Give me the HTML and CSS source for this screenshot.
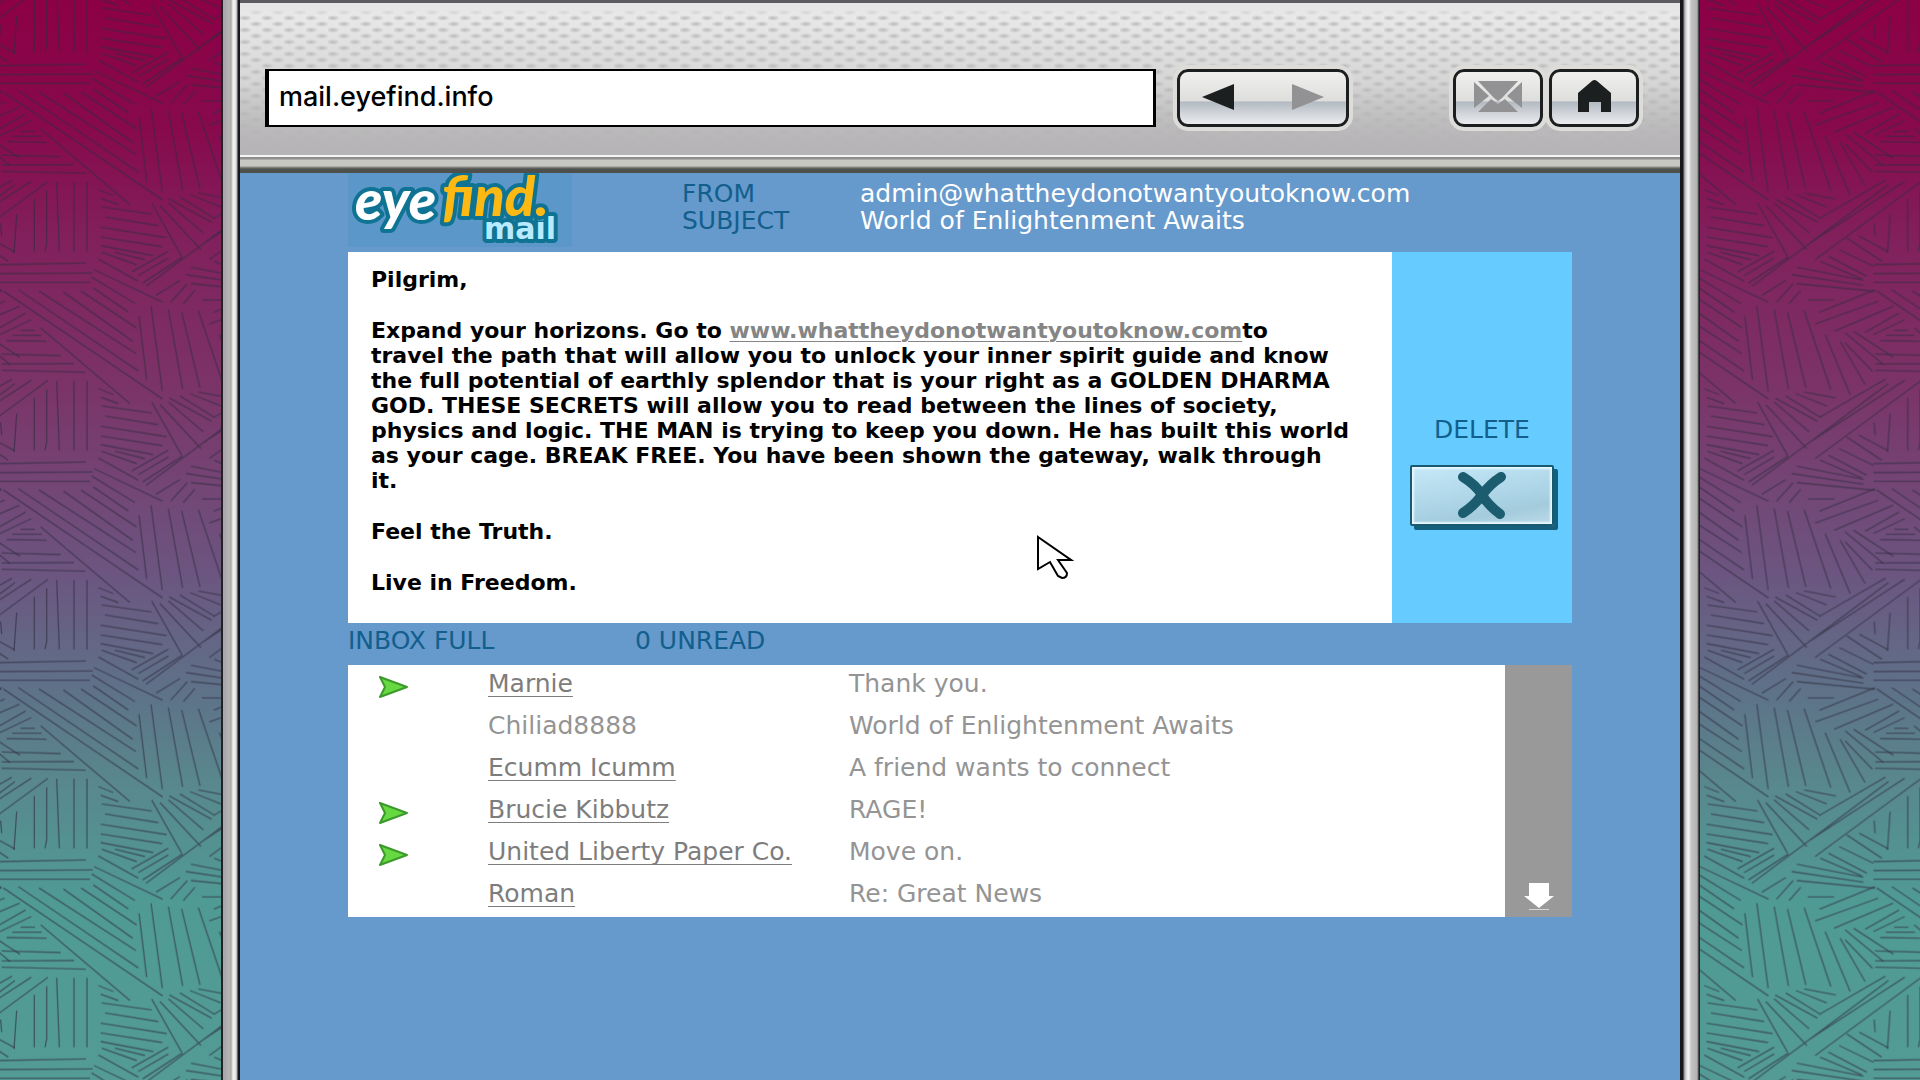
FILE: index.html
```
<!DOCTYPE html>
<html lang="en">
<head>
<meta charset="utf-8">
<title>Eyefind Mail</title>
<link rel="stylesheet" href="styles.css">
</head>
<body>
<svg class="wallpaper" aria-hidden="true">
  <defs>
    <pattern id="hatch" y="80" width="803" height="597" patternUnits="userSpaceOnUse" patternTransform="translate(0 -76) scale(.3333)">
      <g id="strokes">
        <path d="M103 148V305M140 122V280L135 305M170 97L178 305M222 97V305M261 97V305M50 195L42 310M2 222L5 260"/>
        <path d="M0 345L258 340M0 372L278 370M0 398H270"/>
        <path d="M295 120L340 138M302 146L355 165M305 172L455 193M315 202L475 228M302 233L500 264M302 262L487 291M302 288L460 318M345 308L435 330M305 308L410 345"/>
        <path d="M295 328L415 395M282 360L488 458M275 382L405 462M280 415L385 487M243 424L410 535M190 427L398 575M117 424L408 612M55 420L415 664M10 424L488 748M122 535L390 762"/>
        <path d="M395 367L505 305M415 378L505 325M428 400L548 322M438 410L848 105M455 160L545 320M480 168L603 300M505 160L610 250M508 148L635 218M540 142L645 207M570 135L663 172M595 130L690 148M613 280L897 95M628 330L947 95M640 207L839 92"/>
        <path d="M468 437L540 393M512 458L562 402M550 462L585 422M723 265L828 335M760 260L848 307M700 300L803 350M668 320L783 380M643 335L768 388M573 353L773 392M558 375L773 407M573 402L808 425M606 451H685"/>
        <path d="M417 500L440 692M453 470L487 725M505 480L548 718M545 487L600 715M595 483L675 720M658 555L733 735M703 575L778 705M718 580L800 665M718 550L833 645M743 545L863 623"/>
        <path d="M641 488L808 420M628 523L817 455M685 545L862 470M778 548L880 490M803 555L897 510M62 542H105M37 557H125M20 573L140 575M5 613L182 618M5 643L222 642M5 662L257 668"/>
      </g>
      <use href="#strokes" y="-597"/>
      <use href="#strokes" y="597"/>
      <use href="#strokes" x="-803"/>
      <use href="#strokes" x="-803" y="-597"/>
    </pattern>
  </defs>
  <rect width="100%" height="100%" fill="url(#hatch)"/>
</svg>

<div class="frame">
  <div class="rail rail-left"></div>
  <div class="window">
    <header class="toolbar">
      <input class="address" type="text" value="mail.eyefind.info" aria-label="Address">
      <nav class="history">
        <button class="arrow" type="button" aria-label="Back"><svg width="32" height="26" viewBox="0 0 32 26"><path d="M0 13L32 0V26Z"/></svg></button>
        <button class="arrow" type="button" aria-label="Forward" disabled><svg width="32" height="26" viewBox="0 0 32 26"><path d="M32 13L0 0V26Z"/></svg></button>
      </nav>
      <div class="shortcuts">
        <button class="key" type="button" aria-label="Mail"><svg width="48" height="31" viewBox="0 0 48 31" fill="#929294"><path d="M4 0H44L28 17L24 20L20 17Z"/><path d="M0 1L15 15L0 27Z"/><path d="M48 1L33 15L48 27Z"/><path d="M17 18L24 23L31 18L44 31H4Z"/></svg></button>
        <button class="key" type="button" aria-label="Home"><svg width="33" height="32" viewBox="0 0 33 32" fill="#1c1f20"><path d="M14 1Q16.500-1 19 1L33 13V32H23V22H11V32H0V13Z"/></svg></button>
      </div>
    </header>

    <main class="site">
      <div class="masthead">
        <svg class="logo" viewBox="0 0 224 74" role="img" aria-label="eyefind mail">
          <text class="logo-eye" x="7" y="47">eye</text>
          <text class="logo-mail" x="136" y="66">mail</text>
          <text class="logo-find" x="94" y="43">find.</text>
        </svg>
        <dl class="envelope">
          <dt>FROM</dt><dd>admin@whattheydonotwantyoutoknow.com</dd>
          <dt>SUBJECT</dt><dd>World of Enlightenment Awaits</dd>
        </dl>
      </div>

      <section class="message">
        <article class="letter">
          <p>Pilgrim,</p>
          <p>Expand your horizons. Go to <a href="#">www.whattheydonotwantyoutoknow.com</a>to<br>
          travel the path that will allow you to unlock your inner spirit guide and know<br>
          the full potential of earthly splendor that is your right as a GOLDEN DHARMA<br>
          GOD. THESE SECRETS will allow you to read between the lines of society,<br>
          physics and logic. THE MAN is trying to keep you down. He has built this world<br>
          as your cage. BREAK FREE. You have been shown the gateway, walk through<br>
          it.</p>
          <p>Feel the Truth.</p>
          <p>Live in Freedom.</p>
        </article>
        <aside class="actions">
          <label for="delete">DELETE</label>
          <button class="delete" id="delete" type="button"><svg width="50" height="47" viewBox="0 0 50 47"><path d="M6 5Q19 13 25 23T43 42M44 5Q33 12 25 23T6 41"/></svg></button>
        </aside>
      </section>

      <div class="status"><span>INBOX FULL</span><span>0 UNREAD</span></div>

      <section class="inbox">
        <table class="mails">
          <tr><td class="flag"><svg width="30" height="24" viewBox="0 0 30 24"><path d="M2 2L29 12L2 22L7 12Z"/></svg></td><td class="sender"><a href="#">Marnie</a></td><td>Thank you.</td></tr>
          <tr><td class="flag"></td><td class="sender">Chiliad8888</td><td>World of Enlightenment Awaits</td></tr>
          <tr><td class="flag"></td><td class="sender"><a href="#">Ecumm Icumm</a></td><td>A friend wants to connect</td></tr>
          <tr><td class="flag"><svg width="30" height="24" viewBox="0 0 30 24"><path d="M2 2L29 12L2 22L7 12Z"/></svg></td><td class="sender"><a href="#">Brucie Kibbutz</a></td><td>RAGE!</td></tr>
          <tr><td class="flag"><svg width="30" height="24" viewBox="0 0 30 24"><path d="M2 2L29 12L2 22L7 12Z"/></svg></td><td class="sender"><a href="#">United Liberty Paper Co.</a></td><td>Move on.</td></tr>
          <tr><td class="flag"></td><td class="sender"><a href="#">Roman</a></td><td>Re: Great News</td></tr>
        </table>
        <button class="scroll" type="button" aria-label="Scroll down"><svg width="30" height="28" viewBox="0 0 30 28" fill="#fff"><path d="M5 0H25V13H30L15 25L0 13H5Z"/><path d="M5 26H25V27H5Z" opacity=".6"/></svg></button>
      </section>
    </main>
  </div>
  <div class="rail rail-right"></div>
</div>

<svg class="pointer" width="38" height="46" viewBox="0 0 38 46" aria-hidden="true"><path d="M2 2L35 25H22L31 38Q31 43 26 43L22 41L14 27L2 34Z"/></svg>
</body>
</html>
```
FILE: styles.css
```
* { box-sizing: border-box; }

body {
  margin: 0;
  min-height: 100vh;
  padding: 0 220px 0 221px;
  display: flex;
  position: relative;
  font: 25px/25px "DejaVu Sans", sans-serif;
  background: linear-gradient(#8c0046 0%, #870a4d 12%, #81205c 22%, #7b3468 36%, #6c5580 53%, #5e7288 64%, #58898e 73%, #4f9b94 84%, #539b94 100%);
}

button, input { font: inherit; margin: 0; padding: 0; }
button { border: 0; background: none; display: flex; align-items: center; justify-content: center; }

.wallpaper { position: absolute; inset: 0; width: 100%; height: 100%; z-index: -1; }
.wallpaper path { fill: none; stroke: #2d2a3e; stroke-opacity: .6; stroke-width: 4; }

.frame { flex: 1; display: grid; grid-template-columns: 19px minmax(0, 1fr) 20px; }
.rail-left { background: linear-gradient(90deg, #222 0 2px, #a9a7a9 2px 4px, #b8b6b8 8px, #aaa 10px, #efefed 12px 14px, #b5b5b3 16px, #15171a 17px 19px); }
.rail-right { background: linear-gradient(90deg, #15171a 0 3px, #8c8c8c 4px, #d5d5d5 6px, #f1f1f1 8px 9px, #c4c4c4 11px, #b2b2b2 17px, #777 18px, #222 19px 20px); }

.window { background: #6699cc; }

.toolbar {
  height: 173px;
  padding: 66px 41px 0 25px;
  display: flex;
  align-items: flex-start;
  border-top: 3px solid #5b5c60;
  background:
    linear-gradient(transparent 152px, #f4f4f4 152px 154px, #8e8e8c 154px 156px, #c6c6c3 157px 163px, #8d8f8c 164px, #4e504c 166px 170px),
    linear-gradient(#e6e6e6 0 6px, transparent 14px 80px, #b5b3b5f2 149px),
    radial-gradient(ellipse 7px 3px at 5px 3px, #bababa, transparent),
    radial-gradient(ellipse 7px 3px at 16px 9px, #bababa, transparent),
    linear-gradient(#ececec, #cfcfcf 60%, #b4b2b4);
  background-size: auto, auto, 22px 12px, 22px 12px, auto;
}

.address {
  flex: 1;
  min-width: 0;
  height: 58px;
  padding: 0 10px 4px;
  border: solid #000;
  border-width: 2px 3px 2px 4px;
  border-radius: 0;
  background: #fff;
  color: #000;
  font: 500 27px Inter, sans-serif;
}

.history, .key {
  height: 58px;
  border: 3px solid #1c1f20;
  border-radius: 11px;
  outline: 4px solid #dedcd8;
  background: linear-gradient(#f0f0ee, #dededc 55%, #b3bac2 58%, #d2d5da 80%, #ececf0);
}
.history { margin-left: 21px; width: 172px; padding: 0 22px 2px; display: flex; justify-content: space-between; }
.arrow { fill: #1c1f20; }
.arrow:disabled { fill: #929294; }
.shortcuts { margin-left: 104px; display: flex; gap: 6px; }
.key { width: 90px; padding-bottom: 4px; }

.site { padding: 0 108px; }

.masthead { height: 79px; display: flex; align-items: flex-start; }
.logo { width: 224px; height: 74px; background: #5b98c9; }
.logo text { stroke: #0f7393; stroke-width: 8px; stroke-linejoin: round; paint-order: stroke; }
.logo-eye { font: italic 900 56px Lato, sans-serif; fill: #fff; }
.logo-find { font: italic 900 56px Lato, sans-serif; fill: #fdb913; }
.logo-mail { font: bold 30px "DejaVu Sans", sans-serif; fill: #b9eaff; }

.envelope { margin: 7px 0 0 110px; display: grid; grid-template-columns: 178px auto; line-height: 27px; }
.envelope dt { color: #125f8c; }
.envelope dd { margin: 0; color: #fff; }

.message { display: flex; }
.letter { flex: 1; min-height: 371px; padding: 15px 23px; background: #fff; color: #000; white-space: nowrap; font-weight: bold; font-size: 22px; }
.letter p { margin: 0 0 26px; }
.letter p:last-child { margin: 0; }
.letter a { color: #858585; text-decoration: underline 1px; text-underline-offset: 3px; }

.actions { width: 180px; padding-top: 165px; display: flex; flex-direction: column; align-items: center; gap: 23px; background: #66ccff; color: #125f8c; }
.delete {
  width: 144px;
  height: 61px;
  border: 2px solid #1a5a70;
  border-radius: 2px;
  background: linear-gradient(170deg, #c6e9f8, #a9d2e4 60%, #a3cbdc 75%, #bcdbe8);
  box-shadow: 4px 4px 0 #14607c, inset 2px 2px 2px #e8f8ff, inset -2px -2px 2px #e8f8ff;
}
.delete path { fill: none; stroke: #1b5c6e; stroke-width: 10; stroke-linecap: round; }

.status { height: 42px; display: flex; line-height: 35px; color: #125f8c; }
.status span { width: 287px; }

.inbox { display: flex; background: #fff; color: #949494; }
.mails { flex: 1; border-collapse: collapse; table-layout: fixed; }
.mails td { height: 42px; padding: 0 0 6px; white-space: nowrap; vertical-align: middle; }
.mails .flag { width: 140px; padding: 2px 0 0 30px; }
.mails .sender { width: 361px; }
.mails a { color: #7d7d7d; text-decoration: underline 1px; text-underline-offset: 4px; text-decoration-skip-ink: none; }
.flag svg { display: block; }
.flag path { fill: #66d840; stroke: #3b9a2b; stroke-width: 2; stroke-linejoin: round; }
.scroll { width: 67px; align-items: flex-end; padding-bottom: 6px; background: #999; }

.pointer { position: absolute; left: 1036px; top: 535px; }
.pointer path { fill: #fff; stroke: #000; stroke-width: 2; }
```
